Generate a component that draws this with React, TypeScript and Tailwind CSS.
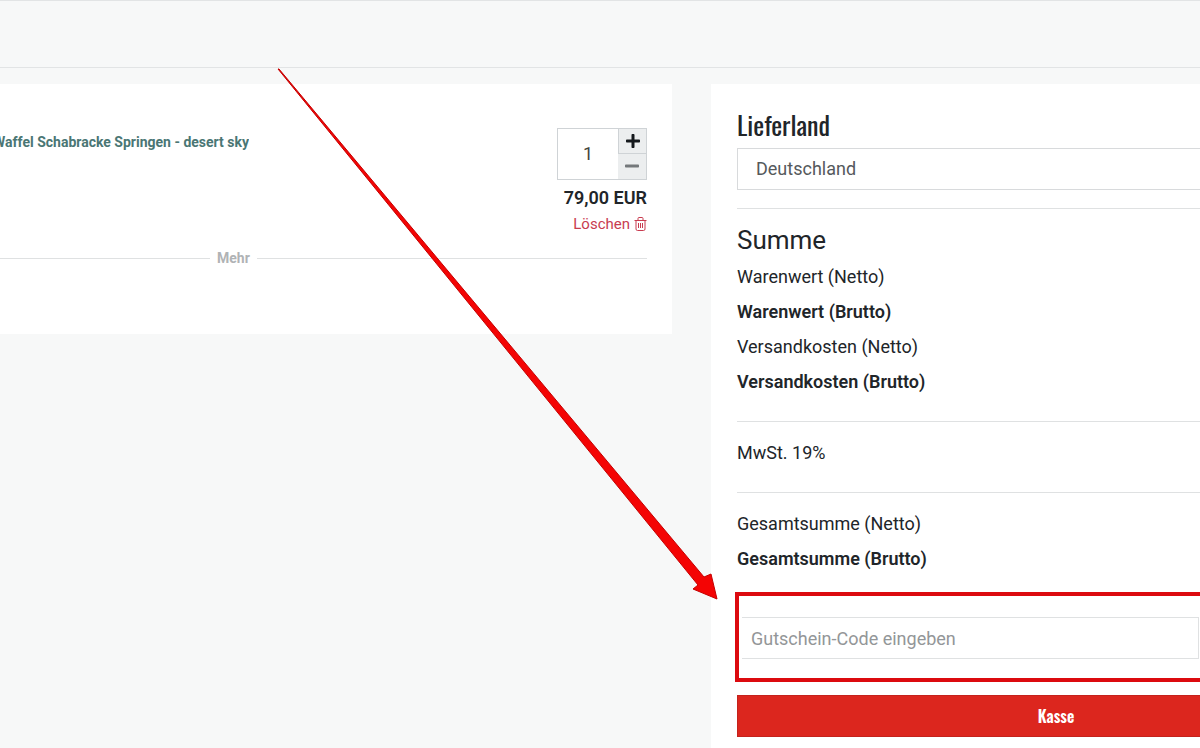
import { FaPlus, FaMinus } from 'react-icons/fa'

const heading = "font-['Oswald','Liberation_Sans_Narrow','Roboto',sans-serif]"

type SumRowProps = {
  label: string
  bold?: boolean
}

function SumRow({ label, bold }: SumRowProps) {
  return (
    <p className={bold ? 'text-lg leading-[35px] font-semibold' : 'text-lg leading-[35px]'}>{label}</p>
  )
}

function TrashIcon() {
  return (
    <svg width="13" height="14" viewBox="0 0 13 14" fill="none" stroke="currentColor" strokeWidth="1">
      <path d="M0.5 3.5h12M4 3.5v-2q0-1 1-1h3q1 0 1 1v2M2 3.5v8.500q0 1.500 1.500 1.500h6q1.500 0 1.500-1.500V3.500M4.500 6v5M6.500 6v5M8.500 6v5" />
    </svg>
  )
}

function CartItem() {
  return (
    <section className="w-[56%] shrink-0 bg-white pt-11 pr-[25px] pb-[66px]">
      <div className="flex justify-between">
        <div className="flex w-[249px] justify-end overflow-hidden pt-1">
          <a href="#" className="text-sm leading-5 font-bold whitespace-nowrap text-[#4a7674]">
            Waffel Schabracke Springen - desert sky
          </a>
        </div>
        <div className="flex flex-col items-end">
          <div className="flex h-[52px] w-[90px] border border-[#cfd3d6]">
            <input
              type="text"
              aria-label="Menge"
              defaultValue="1"
              className="w-[60px] text-center text-lg text-[#44443a] outline-none"
            />
            <div className="flex flex-1 flex-col bg-[#eceeef] text-[#14181c]">
              <button aria-label="Mehr Artikel" className="flex h-[25px] items-center justify-center border-b border-l border-[#cfd3d6]">
                <FaPlus size={16} />
              </button>
              <button aria-label="Weniger Artikel" className="flex h-6 items-center justify-center text-[#74787b]">
                <FaMinus size={16} />
              </button>
            </div>
          </div>
          <p className="mt-1 text-lg leading-7 font-semibold">79,00 EUR</p>
          <button className="flex items-center gap-1 text-[15px] leading-6 text-[#c83c50]">
            Löschen
            <TrashIcon />
          </button>
        </div>
      </div>
      <div className="mt-3 flex items-center">
        <span className="h-px w-[210px] bg-[#dfe1e2]" />
        <button className="px-[7px] text-sm leading-5 font-bold text-[#b0b3b5]">Mehr</button>
        <span className="h-px flex-1 bg-[#dfe1e2]" />
      </div>
    </section>
  )
}

function Summary() {
  return (
    <aside className="ml-[39px] flex-1 bg-white pt-6 pb-3 pl-[26px]">
      <label htmlFor="country" className={`${heading} block h-10 text-[26px] leading-[34px]`}>
        Lieferland
      </label>
      <select
        id="country"
        className="h-[42px] w-full appearance-none border border-r-0 border-[#d8dadc] bg-white pl-[18px] text-lg text-[#55595c]"
      >
        <option>Deutschland</option>
      </select>
      <hr className="mt-[18px] border-[#dfe1e2]" />
      <h2 className="mt-[13px] mb-px text-[26px] leading-9">Summe</h2>
      <SumRow label="Warenwert (Netto)" />
      <SumRow label="Warenwert (Brutto)" bold />
      <SumRow label="Versandkosten (Netto)" />
      <SumRow label="Versandkosten (Brutto)" bold />
      <hr className="mt-[22px] mb-[13px] border-[#dfe1e2]" />
      <SumRow label="MwSt. 19%" />
      <hr className="mt-[22px] mb-[13px] border-[#dfe1e2]" />
      <SumRow label="Gesamtsumme (Netto)" />
      <SumRow label="Gesamtsumme (Brutto)" bold />
      <div className="mt-4 -ml-[2px] border-4 border-r-0 border-[#dc0a0f] pt-[21px] pr-px pb-[19px] pl-[3px]">
        <input
          type="text"
          aria-label="Gutschein-Code"
          placeholder="Gutschein-Code eingeben"
          className="block h-[42px] w-full border border-l-0 border-[#dfe1e2] pl-[9px] text-lg outline-none placeholder:text-[#939698]"
        />
      </div>
      <button className={`${heading} mt-[13px] h-[42px] w-full border border-r-0 border-[#c4221c] bg-[#dc261e] pl-[174px] text-center text-base font-semibold text-white`}>
        Kasse
      </button>
    </aside>
  )
}

export default function App() {
  return (
    <div className="relative min-h-screen overflow-hidden bg-[#f7f8f8] font-[Roboto,sans-serif] text-[#212529]">
      <header className="h-[68px] border-t border-b border-[#e2e4e5]" />
      <main className="flex items-start pt-4">
        <CartItem />
        <Summary />
      </main>
      {/* pointer to the voucher field */}
      <svg className="pointer-events-none absolute top-0 left-0" width="730" height="610" viewBox="0 0 730 610">
        <path d="M278 69 L279 69 L704 577 L711 574 L717 599 L693 589 L698 585 Z" fill="#f40404" stroke="#c40000" strokeWidth="1" />
      </svg>
    </div>
  )
}
